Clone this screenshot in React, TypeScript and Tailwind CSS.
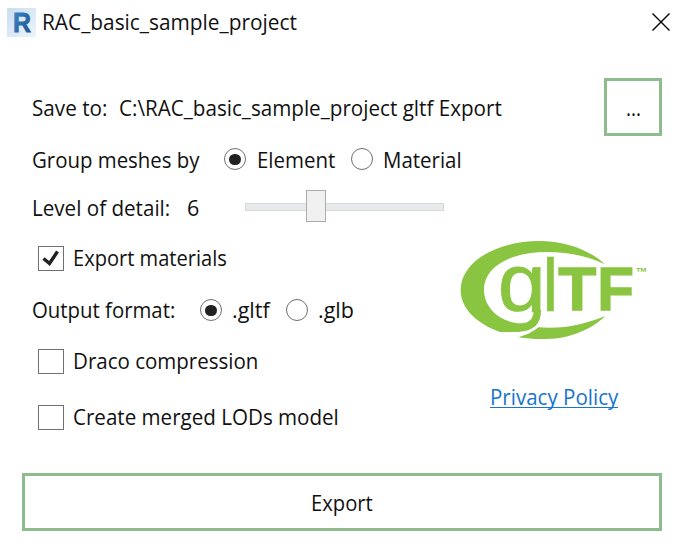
import { useLayoutEffect, useRef, useState } from "react";

/** One line of text, condensed horizontally to fill the given width. */
function FitText({ text, width, className = "" }: { text: string; width: number; className?: string }) {
  const ref = useRef<HTMLSpanElement>(null);
  const [scale, setScale] = useState(1);
  useLayoutEffect(() => {
    if (ref.current) setScale(width / ref.current.offsetWidth);
  }, [text, width]);
  return (
    <span className="block shrink-0" style={{ width }}>
      <span
        ref={ref}
        className={`inline-block origin-left whitespace-nowrap leading-7 ${className}`}
        style={{ transform: `scaleX(${scale})` }}
      >
        {text}
      </span>
    </span>
  );
}

function Radio({ checked = false }: { checked?: boolean }) {
  return (
    <span className="flex size-[22px] shrink-0 items-center justify-center rounded-full border-[1.5px] border-[#707070] bg-white">
      {checked && <span className="h-[11px] w-3 rounded-full bg-[#212121]" />}
    </span>
  );
}

function Checkbox({ checked = false }: { checked?: boolean }) {
  return (
    <span className="flex h-[25px] w-[26px] shrink-0 items-center justify-center border-[1.5px] border-[#707070] bg-white">
      {checked && (
        <svg viewBox="0 0 18 17" className="h-[17px] w-[18px]" fill="none" stroke="#212121" strokeWidth="3.4">
          <path d="M1.5 8.5 L7.5 13.5 L15.5 1.5" />
        </svg>
      )}
    </span>
  );
}

function Logo() {
  return (
    <svg viewBox="0 6 630 348" className="h-[116px] w-[210px]" fill="#8ac541" fontFamily="'Liberation Sans', sans-serif">
      <defs>
        <clipPath id="bowl">
          <rect x="130" y="90" width="170" height="157" />
        </clipPath>
      </defs>
      <path d="M465 103 C420 60 345 33 268 33 C135 33 32 98 32 180 C32 235 78 280 150 306 L205 306 C250 304 274 282 273 240 L251 240 C251 265 238 280 214 280 C150 278 102 235 102 178 C102 112 180 66 290 66 C355 66 415 79 465 103 Z" />
      <path d="M205 322 C230 315 248 306 265 292 C340 298 405 283 466 258 C425 298 360 326 290 327 C260 328 232 326 205 322 Z" />
      <g stroke="#8ac541">
        <g clipPath="url(#bowl)">
          <text x="144" y="242" fontSize="246" strokeWidth="3" textLength="143" lengthAdjust="spacingAndGlyphs">g</text>
        </g>
        <text x="277" y="243" fontSize="220" strokeWidth="1">l</text>
        <text x="325" y="241" fontSize="184" fontWeight="700" strokeWidth="4" textLength="114" lengthAdjust="spacingAndGlyphs">T</text>
        <text x="442" y="241" fontSize="184" fontWeight="700" strokeWidth="4" textLength="110" lengthAdjust="spacingAndGlyphs">F</text>
      </g>
      <text x="557" y="139" fontSize="36" fontWeight="700">™</text>
    </svg>
  );
}

export default function App() {
  return (
    <div className="flex h-[552px] w-[684px] flex-col bg-white font-['Open_Sans','Noto_Sans',sans-serif] text-[21.5px] text-[#111]">
      <header className="flex h-11 items-center pl-[7px] pr-[14px]">
        <svg viewBox="0 0 29 29" className="size-[29px] shrink-0">
          <defs>
            <linearGradient id="tile" x2="1" y2="1">
              <stop stopColor="#c8def1" />
              <stop offset="1" stopColor="#edf4fa" />
            </linearGradient>
            <linearGradient id="letter" x2="1" y2="1">
              <stop stopColor="#3c8acb" />
              <stop offset="1" stopColor="#1c4f8c" />
            </linearGradient>
          </defs>
          <rect width="29" height="29" fill="url(#tile)" />
          <text x="6" y="24" fontSize="28" fontWeight="700" fontFamily="'Liberation Sans', sans-serif" fill="url(#letter)" stroke="url(#letter)" strokeWidth=".8" textLength="18" lengthAdjust="spacingAndGlyphs">R</text>
        </svg>
        <div className="ml-[6px]"><FitText text="RAC_basic_sample_project" width={255} /></div>
        <svg viewBox="0 0 18 18" className="ml-auto size-[18px]" stroke="#000" strokeWidth="1.4">
          <path d="M.5 .5 L17.5 17.5 M17.5 .5 L.5 17.5" />
        </svg>
      </header>

      <main className="mt-[34px] flex flex-col pl-[31px] pr-[22px]">
        <div className="flex h-[58px] items-center">
          <div className="pl-px pt-0.5"><FitText text="Save to:" width={75} /></div>
          <div className="ml-3 pt-0.5"><FitText text="C:\RAC_basic_sample_project gltf Export" width={383} /></div>
          <button className="ml-auto flex size-[58px] items-center justify-center border-[3px] border-[#8fbc8f] pt-0.5">
            <FitText text="..." width={15} />
          </button>
        </div>
        <div className="flex h-[46px] items-center">
          <div className="pl-px pt-0.5"><FitText text="Group meshes by" width={168} /></div>
          <div className="ml-6 flex items-center">
            <Radio checked />
            <div className="pl-[11px] pt-0.5"><FitText text="Element" width={78} /></div>
          </div>
          <div className="ml-4 flex items-center">
            <Radio />
            <div className="pl-[10px] pt-0.5"><FitText text="Material" width={79} /></div>
          </div>
        </div>
        <div className="flex h-[50px] items-center">
          <div className="pl-px pt-0.5"><FitText text="Level of detail:" width={138} /></div>
          <div className="ml-[17px] pt-0.5"><FitText text="6" width={12} /></div>
          <div className="ml-[46px] flex w-[199px] items-center">
            <span className="h-2 w-[61px] border border-r-0 border-[#d6d9d9] bg-[#e7eaea]" />
            <span className="-mt-0.5 h-8 w-[20px] border border-[#acacac] bg-[#f0f0f0]" />
            <span className="h-2 grow border border-l-0 border-[#d6d9d9] bg-[#e7eaea]" />
          </div>
        </div>
        <div className="flex h-[216px]">
          <div className="w-[419px]">
            <div className="flex h-[52px] items-center gap-[9px] pl-[7px]">
              <Checkbox checked />
              <div className="pt-px"><FitText text="Export materials" width={154} /></div>
            </div>
            <div className="flex h-[52px] items-center">
              <div className="pl-px pt-px"><FitText text="Output format:" width={143} /></div>
              <div className="ml-[25px] flex items-center gap-[10px]">
                <Radio checked />
                <div className="pt-px"><FitText text=".gltf" width={38} /></div>
              </div>
              <div className="ml-4 flex items-center gap-[10px]">
                <Radio />
                <div className="pt-px"><FitText text=".glb" width={36} /></div>
              </div>
            </div>
            <div className="flex h-[50px] items-center gap-[9px] pl-[7px]">
              <Checkbox />
              <div className="pt-px"><FitText text="Draco compression" width={185} /></div>
            </div>
            <div className="flex h-[62px] items-center gap-[9px] pl-[7px]">
              <Checkbox />
              <div className="pt-px"><FitText text="Create merged LODs model" width={266} /></div>
            </div>
          </div>
          <div className="flex w-[212px] flex-col">
            <Logo />
            <a href="#privacy" className="ml-[40px] mt-[33px] h-[27px] w-[128px] border-b-[1.5px] border-[#1874cd] text-[#1874cd]">
              <FitText text="Privacy Policy" width={128} />
            </a>
          </div>
        </div>
      </main>

      <button className="ml-[22px] mt-[25px] flex h-[58px] w-[640px] items-center justify-center border-[3px] border-[#8fbc8f] pt-0.5">
        <FitText text="Export" width={62} />
      </button>
    </div>
  );
}
